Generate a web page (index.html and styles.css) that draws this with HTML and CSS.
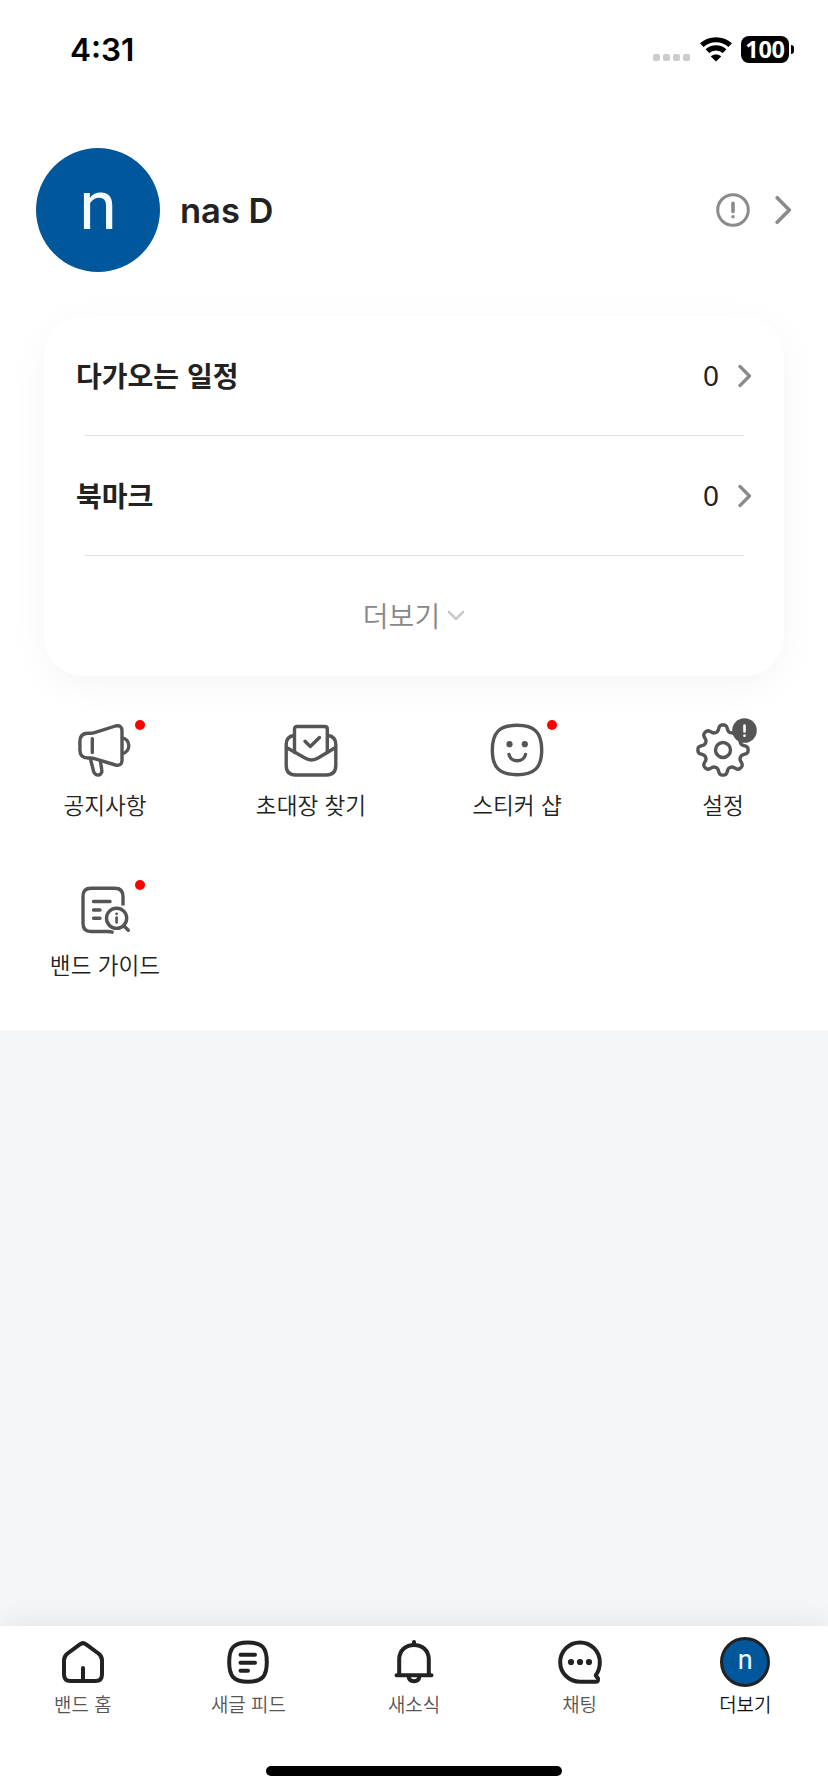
FILE: index.html
```html
<!DOCTYPE html>
<html lang="ko">
<head>
<meta charset="utf-8">
<title>더보기</title>
<link rel="stylesheet" href="styles.css">
</head>
<body>
<div class="screen">
  <header class="status">
    <span class="time">4:31</span>
    <div class="indicators">
      <div class="cell"><i></i><i></i><i></i><i></i></div>
      <svg class="wifi" width="32" height="25" viewBox="0 0 32 25" fill="none" stroke="#000" stroke-width="5.2">
        <path d="M1.8 8.2C9.600 .9 22.400 .9 30.200 8.200"/>
        <path d="M7.400 14.200C12.200 9.800 19.800 9.800 24.600 14.200"/>
        <path d="M16 24.500L10.800 19.400C13.700 16.900 18.300 16.900 21.200 19.400Z" fill="#000" stroke="none"/>
      </svg>
      <div class="battery"><span class="level">100</span><i class="nub"></i></div>
    </div>
  </header>

  <section class="profile">
    <div class="avatar">n</div>
    <h1 class="name">nas D</h1>
    <svg class="alert" width="34" height="34" viewBox="0 0 34 34" fill="none" stroke="#8b8b8b" stroke-linecap="round">
      <circle cx="17" cy="17" r="15.300" stroke-width="3"/>
      <path d="M17 10.300v8.200" stroke-width="3.600"/>
      <circle cx="17" cy="23.800" r="1.700" fill="#8b8b8b" stroke="none"/>
    </svg>
    <svg class="go" width="17" height="30" viewBox="0 0 17 30" fill="none" stroke="#8b8b8b" stroke-width="3.600" stroke-linecap="round" stroke-linejoin="round"><path d="M2.200 2.700L14.300 15L2.200 27.300"/></svg>
  </section>

  <section class="card">
    <div class="row">
      <span class="row-title">다가오는 일정</span><span class="count">0</span>
      <svg width="14" height="24" viewBox="0 0 14 24" fill="none" stroke="#8b8b8b" stroke-width="3.200" stroke-linecap="round" stroke-linejoin="round"><path d="M2 2.500L11.500 12L2 21.500"/></svg>
    </div>
    <div class="row">
      <span class="row-title">북마크</span><span class="count">0</span>
      <svg width="14" height="24" viewBox="0 0 14 24" fill="none" stroke="#8b8b8b" stroke-width="3.200" stroke-linecap="round" stroke-linejoin="round"><path d="M2 2.500L11.500 12L2 21.500"/></svg>
    </div>
    <div class="more">
      <span>더보기</span>
      <svg width="18" height="12" viewBox="0 0 18 12" fill="none" stroke="#cbcbcb" stroke-width="2.600" stroke-linecap="round" stroke-linejoin="round"><path d="M2 2L9 9L16 2"/></svg>
    </div>
  </section>

  <nav class="grid">
    <a class="tile">
      <span class="icon">
        <svg width="60" height="60" viewBox="0 0 60 60">
          <path d="M13 13.300H15.500Q17.500 13.300 19.500 12.600L40.500 6Q47 4.500 47 11V40Q47 46.500 40.500 45L19.500 38.600Q17.500 38 15.500 38H13Q4.900 38 4.900 30V21.500Q4.900 13.300 13 13.300Z"/>
          <path d="M17.300 18.800V32.500M47.500 17.800A8.100 8.100 0 0 1 47.500 33.600M15.500 39L18.600 51.500C20.500 57.500 28 55.500 26.700 49.500L25.500 42"/>
        </svg>
        <i class="dot"></i>
      </span>
      <span class="label">공지사항</span>
    </a>
    <a class="tile">
      <span class="icon">
        <svg width="60" height="60" viewBox="0 0 60 60">
          <path d="M13.500 32.500V9Q13.500 6.500 16 6.500H43.500Q46.300 6.500 46.300 9V32.500"/>
          <path d="M13 15.500Q5.200 16.500 5.200 24.500V45.500Q5.200 55 14.700 55H45.300Q54.800 55 54.800 45.500V24.500Q54.800 16.500 47 15.500M5.500 27.500L23.500 37.800Q30.500 42.200 37.500 37.800L54.500 27.500"/>
          <path d="M24 21.200L29.300 26.500L38.500 17.500"/>
        </svg>
      </span>
      <span class="label">초대장 찾기</span>
    </a>
    <a class="tile">
      <span class="icon">
        <svg width="60" height="60" viewBox="0 0 60 60">
          <path d="M30 5.300C47.500 5.300 54.700 12.500 54.700 30S47.500 54.700 30 54.700S5.300 47.500 5.300 30S12.500 5.300 30 5.300Z"/>
          <path d="M22 34.500C23.600 42.800 36.700 42.800 38.500 34.500"/>
          <circle class="solid" cx="22.500" cy="24.200" r="3.100"/><circle class="solid" cx="37.800" cy="24.200" r="3.100"/>
        </svg>
        <i class="dot"></i>
      </span>
      <span class="label">스티커 샵</span>
    </a>
    <a class="tile">
      <span class="icon">
        <svg width="60" height="60" viewBox="0 0 60 60">
          <path id="gear" d=""/>
          <circle cx="30" cy="30" r="7.500"/>
        </svg>
        <svg class="badge" width="25" height="25" viewBox="0 0 25 25"><circle class="solid" cx="12.500" cy="12.500" r="12.300"/><path class="mark" d="M12.500 7.500V13.500M12.500 17.600V17.700"/></svg>
      </span>
      <span class="label">설정</span>
    </a>
    <a class="tile">
      <span class="icon">
        <svg width="60" height="60" viewBox="0 0 60 60">
          <path stroke-linecap="butt" d="M48 25.500V16.500Q48 8.300 40 8.300H16Q8 8.300 8 16.500V43.500Q8 51.500 16 51.500H32Q35.500 51.500 38.500 52.500"/>
          <path d="M18.500 21.500H35M18.500 30H25M18.500 38.300H25M49 46L53.300 50.300"/>
          <circle cx="41.600" cy="38.300" r="10.100"/>
          <path d="M41.600 37.500V42.500" stroke-width="2.600"/><circle class="solid" cx="41.600" cy="33.800" r="1.400"/>
        </svg>
        <i class="dot"></i>
      </span>
      <span class="label">밴드 가이드</span>
    </a>
  </nav>

  <main class="blank"></main>

  <footer class="tabbar">
    <div class="tabs">
      <a class="tab"><span class="tab-icon"><svg width="50" height="50" viewBox="0 0 50 50"><path d="M22.200 7.200Q25 5 27.800 7.200L40.500 16.500Q44 19.300 44 23.300V37.500Q44 44 37.500 44H12.500Q6 44 6 37.500V23.300Q6 19.300 9.500 16.500ZM25 31V43"/></svg></span><span>밴드 홈</span></a>
      <a class="tab"><span class="tab-icon"><svg width="50" height="50" viewBox="0 0 50 50"><path d="M25 5.500C39.500 5.500 43.800 11 43.800 25S39.500 44.800 25 44.800S6.200 39 6.200 25S10.500 5.500 25 5.500ZM17.500 17.700H32M17.500 25.700H32M17.500 33.700H25"/></svg></span><span>새글 피드</span></a>
      <a class="tab"><span class="tab-icon"><svg width="50" height="50" viewBox="0 0 50 50"><path d="M7.500 38.200H42.500M10.200 38V22.500C10.200 3 39.800 3 39.800 22.500V38M25 5V7M19.500 39.500C20.500 45.800 29.500 45.800 30.500 39.500"/></svg></span><span>새소식</span></a>
      <a class="tab"><span class="tab-icon"><svg width="50" height="50" viewBox="0 0 50 50"><path d="M25 44.700C14 44.700 5.200 36 5.200 25.200A19.800 19.800 0 0 1 44.800 25.200Q44.800 33 40.700 38.300L43 41.500Q43.800 44.700 40.500 44.700Z"/><circle class="ink" cx="16" cy="25" r="3.100"/><circle class="ink" cx="25" cy="25" r="3.100"/><circle class="ink" cx="34" cy="25" r="3.100"/></svg></span><span>채팅</span></a>
      <a class="tab active"><span class="tab-icon"><b class="mini">n</b></span><span>더보기</span></a>
    </div>
    <div class="home-bar"></div>
  </footer>
</div>
<script src="gear.js"></script>
</body>
</html>
```
FILE: gear.js
```js
// Eight-toothed cog outline with a smooth, flattened wave.
const points = [];
for (let i = 0; i < 360; i += 2) {
  const a = i * Math.PI / 180;
  const wave = Math.tanh(1.6 * Math.cos(8 * a)) / Math.tanh(1.6);
  const r = 22 + 3.1 * wave;
  points.push((30 + r * Math.sin(a)).toFixed(2) + ' ' + (30 - r * Math.cos(a)).toFixed(2));
}
document.getElementById('gear').setAttribute('d', 'M' + points.join('L') + 'Z');
```
FILE: styles.css
```css
* { box-sizing: border-box; }
body {
  margin: 0;
  background: #fff;
  color: #222;
  font-family: Inter, "Noto Sans CJK KR", sans-serif;
}
.screen { display: flex; flex-direction: column; width: 828px; height: 1792px; overflow: hidden; }

.status { display: flex; justify-content: space-between; height: 100px; padding: 0 34px 0 70px; }
.time { color: #000; font-size: 31.5px; font-weight: 600; line-height: 99px; }
.indicators { display: flex; align-items: center; height: 99px; }
.cell { display: flex; gap: 3px; margin: 16px 10px 0 0; }
.cell i { width: 7px; height: 7px; border-radius: 2px; background: #ccc; }
.wifi { margin-right: 9px; }
.battery { display: flex; align-items: center; gap: 2px; }
.level {
  width: 48px; height: 27px; border-radius: 8px; background: #000; color: #fff;
  font: 700 23.5px/27px "Noto Sans", sans-serif; text-align: center; letter-spacing: -.3px;
}
.nub { width: 3px; height: 9px; border-radius: 0 5px 5px 0; background: #000; }

.profile { display: flex; align-items: center; height: 220px; padding: 0 36px; }
.avatar {
  width: 124px; height: 124px; border-radius: 50%; background: #01579b; color: #f4fbff;
  font: 450 68px/116px Roboto, sans-serif; text-align: center;
}
.name { flex: 1; margin: 0 0 0 20px; font-size: 34.5px; font-weight: 600; letter-spacing: 0; }
.go { margin-left: 25px; }

.card {
  width: 740px; height: 360px; margin: -4px 0 0 44px; border-radius: 40px;
  background: #fff; box-shadow: 0 9px 36px rgba(0,0,0,.045); flex: none;
}
.row { display: flex; align-items: center; height: 120px; padding: 0 32px; position: relative; }
.row::after { content: ""; position: absolute; left: 40px; right: 40px; bottom: 0; height: 1px; background: #e3e3e3; }
.row-title { flex: 1; padding-bottom: 3px; font: 700 28px/40px "Noto Sans CJK KR", sans-serif; }
.count { margin-right: 19px; padding-bottom: 2px; font-size: 28px; font-family: "Noto Sans", sans-serif; }
.more { display: flex; align-items: center; justify-content: center; gap: 7px; height: 120px; color: #888; font-size: 28px; font-weight: 350; }
.more span { padding-bottom: 3px; }

.grid { display: grid; grid-template-columns: repeat(4, 206px); grid-auto-rows: 160px; height: 354px; padding: 44px 0 0 2px; }
.tile { display: flex; flex-direction: column; align-items: center; }
.icon { position: relative; display: block; width: 60px; height: 60px; }
.icon svg { display: block; fill: none; stroke: #555; stroke-width: 3.400; stroke-linecap: round; stroke-linejoin: round; }
.icon .solid { fill: #555; stroke: none; }
.dot { position: absolute; left: 60px; top: 0; width: 10px; height: 10px; border-radius: 50%; background: #f00; }
.icon .badge { position: absolute; left: 39px; top: -2px; }
.icon .mark { stroke: #fff; stroke-width: 2.600; }
.label { margin-top: 10px; color: #222; font-size: 22.600px; font-weight: 350; line-height: 32px; }

.blank { flex: 1; background: #f4f6f8; }

.tabbar { position: relative; height: 166px; background: #fff; box-shadow: 0 0 30px rgba(0,0,0,.09); }
.tabs { display: grid; grid-template-columns: repeat(5, 1fr); height: 140px; padding-top: 11px; }
.tab { display: flex; flex-direction: column; align-items: center; color: #555; font-size: 18.900px; font-weight: 350; line-height: 28px; }
.tab-icon { display: block; width: 50px; height: 50px; margin-bottom: 5px; }
.tab-icon svg { display: block; fill: none; stroke: #222; stroke-width: 4; stroke-linecap: round; stroke-linejoin: round; }
.tab-icon .ink { fill: #222; stroke: none; }
.active { color: #111; }
.mini {
  display: block; width: 50px; height: 50px; border: 3.500px solid #222; border-radius: 50%;
  background: #01579b; color: #f4fbff; font: 400 27px/41px Roboto, sans-serif; text-align: center;
}
.home-bar { width: 296px; height: 10px; margin: 0 auto; border-radius: 5px; background: #000; }
```
